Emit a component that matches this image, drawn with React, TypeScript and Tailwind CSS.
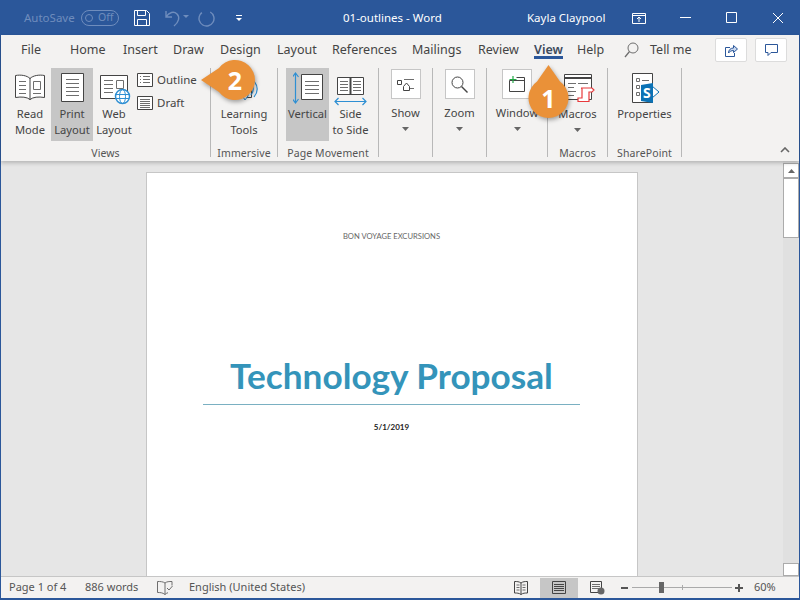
import React from "react";

const S = ({ w, h, children, className = "" }: { w: number; h: number; children: React.ReactNode; className?: string }) => (
  <svg width={w} height={h} viewBox={`0 0 ${w} ${h}`} fill="none" className={`block ${className}`}>{children}</svg>
);
const D = "#444444";
const G = "#6e6e6e";
const B = "#2e8fd3";

const Lines = ({ x1, x2, ys, c = G }: { x1: number; x2: number; ys: number[]; c?: string }) => (
  <>{ys.map((y) => <path key={y} d={`M${x1} ${y}.5H${x2}`} stroke={c} />)}</>
);

const ReadIcon = () => (
  <S w={30} h={28}>
    <path d="M15 4.500C12 1.500 6 .5.5 1.500v22c6-1 11.500-.5 14.500 2 3-2.500 8.500-3 14.500-2v-22c-5.500-1-11.500 0-14.500 3z" fill="#fff" stroke={D} />
    <path d="M15 4v22" stroke={D} />
    <Lines x1={4} x2={11} ys={[7, 11, 15, 19]} />
    <path d="M18.500 7.500h7v8h-7z" stroke={G} />
    <Lines x1={18} x2={26} ys={[19]} />
  </S>
);
const PrintIcon = () => (
  <S w={23} h={29}>
    <path d="M.5.500h22v28H.5z" fill="#fff" stroke={D} />
    <Lines x1={5} x2={18} ys={[6, 10, 14, 18, 22]} />
  </S>
);
const WebIcon = () => (
  <S w={31} h={30}>
    <path d="M.5.500h27v23H.5z" fill="#fff" stroke={D} />
    <Lines x1={4} x2={13} ys={[5, 9, 13, 17]} />
    <path d="M16.500 5.500h7v8h-7z" stroke={G} />
    <circle cx={22.500} cy={21.500} r={7} fill="#fff" stroke={B} strokeWidth={1.500} />
    <ellipse cx={22.500} cy={21.500} rx={3} ry={7} stroke={B} />
    <path d="M16 19.500h13M16 23.500h13" stroke={B} />
  </S>
);
const OutlineIcon = () => (
  <S w={16} h={14}>
    <path d="M.5.500h15v13H.5z" fill="#fff" stroke={D} />
    <path d="M3 3.500h1M3 6.500h1M3 9.500h1M6 3.500h7M6 6.500h7M6 9.500h7" stroke={G} />
  </S>
);
const DraftIcon = () => (
  <S w={16} h={14}>
    <path d="M.5.500h15v13H.5z" fill="#fff" stroke={D} />
    <Lines x1={3} x2={13} ys={[3, 5, 7, 9, 11]} />
  </S>
);
const LearnIcon = () => (
  <S w={28} h={30}>
    <path d="M6.500.500h15v24h-15z" fill="#fff" stroke={D} />
    <path d="M12 13l6-4v14l-3 4-3-5v-9z" fill="#fff" stroke={B} />
    <path d="M21 10c3 4 3 8 0 12M24 8c4 5 4 11 0 16" stroke={B} strokeWidth={1.200} />
  </S>
);
const VerticalIcon = () => (
  <S w={30} h={32}>
    <path d="M2.500 1v30M-.5 5l3-4 3 4M-.5 27l3 4 3-4" stroke={B} strokeWidth={1.200} />
    <path d="M8.500 2.500h21v25h-21z" fill="#fff" stroke={D} />
    <Lines x1={12} x2={26} ys={[9, 13, 17, 21]} />
  </S>
);
const SideIcon = () => (
  <S w={33} h={30}>
    <path d="M3.500 1.500h26v17h-26z" fill="#fff" stroke={D} />
    <path d="M16.500 1v18" stroke={D} strokeWidth={2} />
    <Lines x1={6} x2={14} ys={[5, 8, 11, 14]} />
    <Lines x1={19} x2={27} ys={[5, 8, 11, 14]} />
    <path d="M1 25.500h31M4.500 22L1 25.500 4.500 29M28.500 22l3.500 3.500-3.500 3.500" stroke={B} strokeWidth={1.200} />
  </S>
);
const ShowIcon = () => (
  <S w={17} h={15}>
    <path d="M.5 3.500h4v4h-4zM6.500 9.500l3-3.500 3 3.500v4h-6z" stroke={D} />
    <path d="M7 2.500h10M13 11.500h4" stroke={G} />
  </S>
);
const ZoomIcon = () => (
  <S w={17} h={17}>
    <circle cx={6.500} cy={6.500} r={5.500} stroke={D} />
    <path d="M10.500 10.500l6 6" stroke={D} strokeWidth={1.400} />
  </S>
);
const WindowIcon = () => (
  <S w={17} h={16}>
    <path d="M.5 4.500v11h15V1.500H7.500M.5 4.500h15" stroke={D} />
    <path d="M4 0v7M.5 3.500h7" stroke="#22a846" strokeWidth={1.200} />
  </S>
);
const MacrosIcon = () => (
  <S w={31} h={30}>
    <path d="M.5.500h27v25H.5z" fill="#fff" stroke={D} />
    <path d="M.5 4h27" stroke={D} strokeWidth={2} />
    <path d="M4 9.500h8M14 9.500h10M4 13.500h6M4 17.500h8M4 21.500h6" stroke={G} />
    <path d="M17 14h11l2 2-2 2h-3v9.500H14v-3.500h4V15c0-.5-.5-1-1-1z" fill="#fff" stroke="#e8393b" strokeWidth={1.200} />
  </S>
);
const PropsIcon = () => (
  <S w={28} h={31}>
    <path d="M.5.500h20v29H.5z" fill="#fff" stroke={D} />
    <path d="M4.500 5.500h3v3h-3zM4.500 12.500h3v3h-3zM4.500 19.500h3v3h-3zM10 7.500h7" stroke={G} />
    <path d="M20 13l7 6-7 6" fill="#fff" stroke="#0b72b5" />
    <path d="M9 12l12-2v20l-12-2z" fill="#0b72b5" />
    <text x={11} y={25} fill="#fff" fontSize={14} fontWeight={700} fontFamily="Noto Sans, sans-serif">S</text>
  </S>
);

const Big = ({ w, icon, l1, l2, active, iconClass = "" }: { w: string; icon: React.ReactNode; l1: string; l2?: string; active?: boolean; iconClass?: string }) => (
  <div className={`${w} h-[73px] flex flex-col items-center shrink-0 ${active ? "bg-[#c6c6c6]" : ""}`}>
    <div className={`h-[38px] w-full flex justify-center items-start ${iconClass}`}>{icon}</div>
    <div className="text-[11.2px] leading-[16px] text-center text-[#444] whitespace-nowrap">{l1}</div>
    {l2 && <div className="text-[11.2px] leading-[16px] text-center text-[#444] whitespace-nowrap">{l2}</div>}
  </div>
);

const Boxed = ({ w, icon, label }: { w: string; icon: React.ReactNode; label: string }) => (
  <div className={`${w} h-[73px] flex flex-col items-center shrink-0`}>
    <div className="mt-[1px] w-[30px] h-[30px] bg-white border border-[#c6c6c6] flex items-center justify-center">{icon}</div>
    <div className="mt-[6px] text-[11.2px] leading-[16px] text-center text-[#444] whitespace-nowrap">{label}</div>
    <Caret className="mt-[6px]" />
  </div>
);

const Caret = ({ className = "" }: { className?: string }) => (
  <svg width={7} height={4} viewBox="0 0 7 4" className={`block ${className}`}><path d="M0 0h7L3.500 4z" fill="#666" /></svg>
);

const Group = ({ w, label, children, pl = "" }: { w: string; label: string; children: React.ReactNode; pl?: string }) => (
  <div className={`${w} h-[89px] shrink-0 border-r border-[#b8b8b8] flex flex-col`}>
    <div className={`h-[73px] flex ${pl}`}>{children}</div>
    <div className="h-[16px] pt-[5px] text-center text-[10.5px] leading-[14px] tracking-[0.1px] text-[#555] whitespace-nowrap">{label}</div>
  </div>
);

const tabs: [string, string][] = [
  ["Home", "w-[53px]"],
  ["Insert", "w-[50px]"],
  ["Draw", "w-[47px]"],
  ["Design", "w-[57px]"],
  ["Layout", "w-[55px]"],
  ["References", "w-[80px]"],
  ["Mailings", "w-[66px]"],
  ["Review", "w-[56px]"],
];

export default function App() {
  return (
    <div className="relative w-[800px] h-[600px] overflow-hidden flex flex-col bg-[#2b579a] font-['Noto_Sans',sans-serif]">
      {/* title bar */}
      <div className="h-[35px] shrink-0 flex items-center text-white text-[11.5px]">
        <span className="ml-[24px] w-[57px] text-[#6f8dbd]">AutoSave</span>
        <div className="w-[38px] h-[16px] rounded-full border border-[#6f8dbd] flex items-center pl-[3px] gap-[5px]">
          <span className="w-[8px] h-[8px] rounded-full border border-[#6f8dbd]" />
          <span className="text-[10.5px] leading-none text-[#6f8dbd]">Off</span>
        </div>
        <S w={16} h={16} className="ml-[15px]">
          <path d="M.5.500h12l3 3v12H.5z" stroke="#fff" />
          <path d="M3.500.5v5h8v-5M3.500 15.500v-6h9v6" stroke="#fff" />
        </S>
        <S w={26} h={18} className="ml-[14px]">
          <path d="M2 2v6h6M2 8c3-5 8-6 11-3 3 3 2 8-3 12" stroke="#6f8dbd" strokeWidth={1.400} />
          <path d="M19 6h6l-3 3z" fill="#6f8dbd" />
        </S>
        <S w={19} h={18} className="ml-[7px]">
          <circle cx={9.500} cy={9.500} r={7.500} stroke="#6f8dbd" strokeWidth={1.400} strokeDasharray="38 9" transform="rotate(-60 9.500 9.500)" />
        </S>
        <S w={8} h={8} className="ml-[19px]">
          <path d="M1 1.500h6" stroke="#fff" />
          <path d="M1 4h6L4 7z" fill="#fff" />
        </S>
        <span className="ml-[100px] w-[184px] whitespace-nowrap">01-outlines - Word</span>
        <span className="whitespace-nowrap w-[105px]">Kayla Claypool</span>
        <S w={14} h={12}>
          <path d="M.5 1.500h13v10H.5zM.5 3.500h13" stroke="#fff" />
          <path d="M7 10V5M5 7l2-2 2 2" stroke="#fff" />
        </S>
        <S w={11} h={1} className="ml-[34px]"><path d="M0 .5h11" stroke="#fff" /></S>
        <S w={11} h={11} className="ml-[35px]"><path d="M.5.500h10v10H.5z" stroke="#fff" /></S>
        <S w={12} h={12} className="ml-[35px]"><path d="M1 1l10 10M11 1L1 11" stroke="#fff" /></S>
      </div>

      <div className="flex-1 min-h-0 mx-[1px] flex flex-col bg-[#e6e6e6]">
        {/* tabs + ribbon */}
        <div className="relative z-10 h-[126px] shrink-0 bg-[#f3f2f1] shadow-[0_2px_4px_rgba(0,0,0,0.22)] flex flex-col">
          <div className="h-[30px] shrink-0 flex items-center text-[12.5px] text-[#444]">
            <span className="ml-[20px] w-[49px]">File</span>
            {tabs.map(([t, w]) => (
              <span key={t} className={`${w} whitespace-nowrap`}>{t}</span>
            ))}
            <div className="relative w-[43px]">
              <span className="font-semibold text-[#3d4a5c]">View</span>
              <div className="absolute left-0 top-[15px] w-[29px] h-[3px] bg-[#2b579a]" />
            </div>
            <span className="w-[47px]">Help</span>
            <S w={15} h={16}>
              <circle cx={9} cy={6} r={5} stroke={G} />
              <path d="M5.500 9.500L1 15" stroke={G} strokeWidth={1.300} />
            </S>
            <span className="ml-[11px] w-[65px] whitespace-nowrap">Tell me</span>
            <div className="w-[32px] h-[24px] bg-white border border-[#dcdcdc] rounded-[2px] flex items-center justify-center">
              <S w={13} h={13}>
                <path d="M5 3.500H.5v9h9V9" stroke="#2b579a" />
                <path d="M3.500 9c0-3 2-5 5-5V1.500l4 3.500-4 3.500V6.500c-2 0-4 1-5 2.500z" stroke="#2b579a" fill="#c9d8ef" />
              </S>
            </div>
            <div className="ml-[8px] w-[32px] h-[24px] bg-white border border-[#dcdcdc] rounded-[2px] flex items-center justify-center">
              <S w={13} h={12}>
                <path d="M.5.500h12v8H6l-3 3v-3H.5z" stroke="#2b579a" />
              </S>
            </div>
          </div>
          <div className="mt-[3px] h-[89px] flex">
            <Group w="w-[210px]" label="Views" pl="pl-[8px]">
              <Big w="w-[42px]" icon={<ReadIcon />} l1="Read" l2="Mode" iconClass="pt-[6px]" />
              <Big w="w-[42px]" icon={<PrintIcon />} l1="Print" l2="Layout" active iconClass="pt-[5px]" />
              <Big w="w-[42px]" icon={<WebIcon />} l1="Web" l2="Layout" iconClass="pt-[7px] pl-[2px]" />
              <div className="ml-[2px] pt-[5px] flex flex-col gap-[9px] text-[11.5px] leading-[14px] text-[#444]">
                <div className="flex items-center gap-[4px]"><OutlineIcon />Outline</div>
                <div className="flex items-center gap-[4px]"><DraftIcon />Draft</div>
              </div>
            </Group>
            <Group w="w-[67px]" label="Immersive">
              <Big w="w-full" icon={<LearnIcon />} l1="Learning" l2="Tools" iconClass="pt-[5px]" />
            </Group>
            <Group w="w-[101px]" label="Page Movement" pl="pl-[8px]">
              <Big w="w-[43px]" icon={<VerticalIcon />} l1="Vertical" active iconClass="pt-[4px]" />
              <Big w="w-[43px]" icon={<SideIcon />} l1="Side" l2="to Side" iconClass="pt-[8px]" />
            </Group>
            <Group w="w-[54px]" label="">
              <Boxed w="w-full" icon={<ShowIcon />} label="Show" />
            </Group>
            <Group w="w-[54px]" label="">
              <Boxed w="w-full" icon={<ZoomIcon />} label="Zoom" />
            </Group>
            <Group w="w-[61px]" label="">
              <Boxed w="w-full" icon={<WindowIcon />} label="Window" />
            </Group>
            <Group w="w-[60px]" label="Macros">
              <div className="w-full h-[73px] flex flex-col items-center">
                <div className="h-[38px] pt-[6px] pl-[4px]"><MacrosIcon /></div>
                <div className="text-[11.2px] leading-[16px] text-[#444]">Macros</div>
                <Caret className="mt-[6px]" />
              </div>
            </Group>
            <Group w="w-[74px]" label="SharePoint">
              <Big w="w-full" icon={<PropsIcon />} l1="Properties" iconClass="pt-[5px] pl-[2px]" />
            </Group>
            <div className="flex-1 flex justify-end items-end pr-[9px] pb-[4px]">
              <S w={10} h={6}><path d="M1 5l4-4 4 4" stroke="#666" strokeWidth={1.600} /></S>
            </div>
          </div>
        </div>

        {/* document */}
        <div className="flex-1 min-h-0 flex overflow-hidden">
          <div className="flex-1 min-w-0 pl-[145px] pt-[11px] overflow-hidden">
            <div className="w-[492px] h-[500px] bg-white border border-[#c6c6c6] pl-[56px] pr-[57px] flex flex-col items-center font-['Lato',sans-serif]">
              <div className="mt-[57px] text-[7.6px] leading-[12px] text-[#666]">BON VOYAGE EXCURSIONS</div>
              <div className="mt-[110px] text-[35.2px] leading-[46px] font-bold text-[#3494ba] whitespace-nowrap">Technology Proposal</div>
              <div className="mt-[6px] w-full h-[1px] bg-[#7ab0c2]" />
              <div className="mt-[16px] text-[8px] leading-[12px] font-bold text-[#222]">5/1/2019</div>
            </div>
          </div>
          <div className="w-[16px] shrink-0 bg-[#e0e0e0] flex flex-col pt-[2px]">
            <div className="h-[15px] bg-white border border-[#ababab] flex items-center justify-center">
              <svg width={7} height={4} viewBox="0 0 7 4" className="block"><path d="M3.500 0L7 4H0z" fill="#666" /></svg>
            </div>
            <div className="h-[60px] bg-white border border-[#ababab]" />
            <div className="flex-1" />
            <div className="h-[13px] bg-white border border-[#ababab]" />
          </div>
        </div>

        {/* status bar */}
        <div className="h-[21px] shrink-0 bg-[#f3f2f1] border-t border-[#c6c6c6] flex items-center text-[11px] text-[#555] box-content">
          <span className="ml-[8px] w-[76px] whitespace-nowrap">Page 1 of 4</span>
          <span className="w-[72px] whitespace-nowrap">886 words</span>
          <S w={16} h={14}>
            <path d="M8 2C6 .5 3 .5.5.5v11c2.500 0 5 0 7.500 2V2zM8 2c2-1.500 4-1.500 7-1.500v4M8 13.500c1-1 2-1.500 3-1.800" stroke={G} />
            <path d="M10 7l2 2 3.500-4" stroke={G} />
          </S>
          <span className="ml-[16px] w-[325px] whitespace-nowrap">English (United States)</span>
          <S w={14} h={14}>
            <path d="M7 2C5 .5 3 .5.5.5v11.500c2.500 0 4.500 0 6.500 1.500 2-1.500 4-1.500 6.500-1.500V.5C11 .5 9 .5 7 2zM7 2v11.500" stroke={D} />
            <path d="M2.500 4h3M2.500 6.500h3M2.500 9h3M8.500 4h3M8.500 6.500h3M8.500 9h3" stroke={G} />
          </S>
          <div className="ml-[12px] w-[38px] h-[20px] bg-[#c6c6c6] flex items-center justify-center">
            <S w={14} h={13}>
              <path d="M.5.500h13v12H.5z" stroke={D} />
              <Lines x1={2} x2={12} ys={[3, 5, 7, 9]} c={D} />
            </S>
          </div>
          <S w={15} h={14} className="ml-[12px]">
            <path d="M.5.500h11v11H.5z" stroke={D} />
            <Lines x1={2} x2={10} ys={[3, 5, 7]} />
            <circle cx={11} cy={10} r={3.500} fill="#666" />
          </S>
          <div className="ml-[16px] w-[7px] h-[2px] bg-[#555]" />
          <div className="relative ml-[4px] w-[100px] h-[1px] bg-[#aaa]">
            <div className="absolute left-[27px] -top-[5px] w-[5px] h-[11px] bg-[#666]" />
            <div className="absolute left-[50px] -top-[2px] w-[1px] h-[5px] bg-[#aaa]" />
          </div>
          <div className="relative ml-[3px] w-[8px] h-[8px]">
            <div className="absolute left-0 top-[3px] w-[8px] h-[2px] bg-[#555]" />
            <div className="absolute left-[3px] top-0 w-[2px] h-[8px] bg-[#555]" />
          </div>
          <span className="ml-[11px]">60%</span>
        </div>
      </div>
      <div className="h-[2px] shrink-0" />

      {/* callout 2 */}
      <div className="absolute z-20 left-[200px] top-[62px] w-[56px] h-[40px] text-white">
        <svg width={56} height={40} viewBox="0 0 56 40" className="absolute inset-0 overflow-visible drop-shadow-[1px_2px_2px_rgba(0,0,0,0.35)]">
          <path d="M1 18L19 6A20 20 0 1 1 19 30z" fill="#ea9138" />
        </svg>
        <span className="absolute left-[16px] -top-[1px] w-[38px] h-[40px] flex items-center justify-center text-[25px] font-bold font-['Open_Sans',sans-serif]">2</span>
      </div>
      {/* callout 1 */}
      <div className="absolute z-20 left-[529px] top-[65px] w-[39px] h-[53px] text-white">
        <svg width={39} height={53} viewBox="0 0 39 53" className="absolute inset-0 overflow-visible drop-shadow-[1px_2px_2px_rgba(0,0,0,0.35)]">
          <path d="M19.500 0L31 16.600A20 20 0 1 1 8 16.600z" fill="#ea9138" />
        </svg>
        <span className="absolute left-0 top-[15px] w-[39px] h-[38px] flex items-center justify-center text-[25px] font-bold font-['Open_Sans',sans-serif]">1</span>
      </div>
    </div>
  );
}
